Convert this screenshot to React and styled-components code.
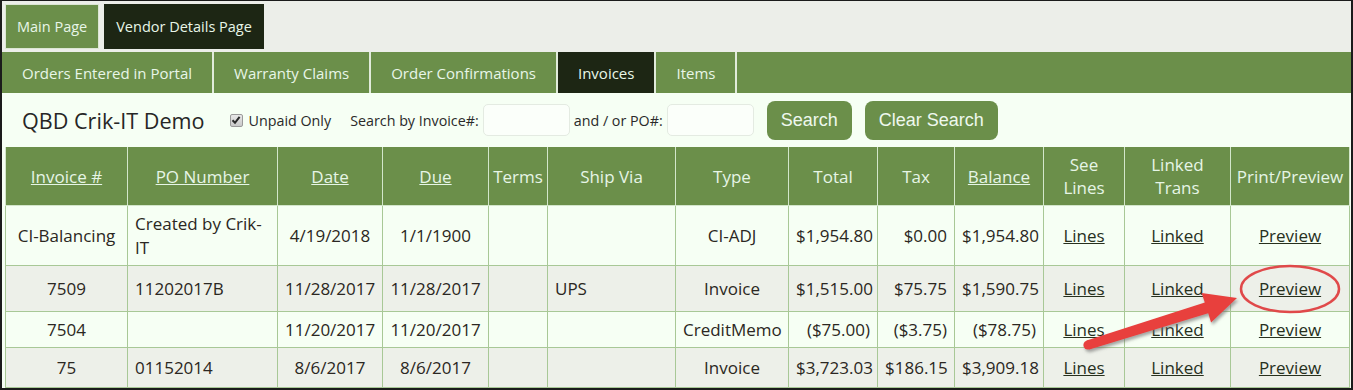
import styled, { createGlobalStyle } from "styled-components"

const GlobalStyle = createGlobalStyle`
  body {
    margin: 0;
    background: #ffffff;
    font-family: "Open Sans", "Noto Sans", sans-serif;
  }
`

const Frame = styled.div`
  position: relative;
  box-sizing: border-box;
  width: 1353px;
  height: 390px;
  overflow: hidden;
  border-style: solid;
  border-color: #1b1b1b;
  border-width: 1px 2px 2px 2px;
  background: #f6fff4;
`

const TopNav = styled.nav`
  display: flex;
  gap: 5px;
  padding: 3px 0 3px 3px;
  background: #eceee9;
`

const TopTab = styled.div`
  box-sizing: border-box;
  height: 45px;
  padding: 0 11px;
  display: flex;
  align-items: center;
  font-size: 14.5px;
  color: #e8f6e8;
  background: ${p => (p.$active ? "#1d2614" : "#6b8f4a")};
  border: 1px solid ${p => (p.$active ? "#1d2614" : "#dbe6d3")};
`

const SubNav = styled.nav`
  display: flex;
  height: 41px;
  background: #6b8f4a;
`

const SubTab = styled.div`
  display: flex;
  align-items: center;
  padding: 0 20px;
  font-size: 15px;
  color: #e8f6e8;
  background: ${p => (p.$active ? "#1d2614" : "#6b8f4a")};
  border-right: 2px solid #e1ebdb;
`

const Toolbar = styled.div`
  display: flex;
  align-items: center;
  height: 54px;
  padding-left: 20px;
  color: #2a2a2a;
`

const Title = styled.h1`
  margin: 0 25px 0 0;
  font-size: 21.6px;
  font-weight: 400;
  color: #262626;
`

const CheckBox = styled.span`
  box-sizing: border-box;
  width: 13px;
  height: 13px;
  margin-right: 6px;
  display: flex;
  align-items: center;
  justify-content: center;
  border: 1px solid #9a9a9a;
  border-radius: 2px;
  background: linear-gradient(#e8e8e8, #c9c9c9);
`

const Label = styled.span`
  font-size: 14.3px;
  margin-right: ${p => p.$gap || 4}px;
`

const Field = styled.input`
  box-sizing: border-box;
  width: 87px;
  height: 32px;
  margin-right: 4px;
  border: 1px solid #e4ebe2;
  border-radius: 5px;
  background: #fbfffa;
  outline: none;
`

const Button = styled.button`
  box-sizing: border-box;
  height: 39px;
  margin-left: ${p => p.$gap || 0}px;
  padding: 0 14px;
  border: none;
  border-radius: 8px;
  background: #6b8f4a;
  color: #eef8ee;
  font-family: "Liberation Sans", Arial, sans-serif;
  font-size: 18px;
`

const Table = styled.table`
  margin-left: 3px;
  width: 1344px;
  table-layout: fixed;
  border-collapse: collapse;
  font-size: 17px;
  line-height: 24px;
`

const Th = styled.th`
  height: 58px;
  padding: 0 4px;
  background: #6b8f4a;
  color: #e6f5e6;
  font-weight: 400;
  line-height: 23px;
  border: 1px solid #d3e6cb;
  border-top: none;

  a {
    color: #e6f5e6;
    text-decoration: underline;
  }
`

const Row = styled.tr`
  height: ${p => p.$h}px;
  background: ${p => (p.$alt ? "#edf0e9" : "#f6fff4")};
`

const Td = styled.td`
  padding: 0 7px;
  text-align: ${p => p.$align || "center"};
  color: #2b2722;
  border: 1px solid #a8c896;
  vertical-align: middle;

  a {
    color: #27301d;
    text-decoration: underline;
  }
`

const Overlay = styled.svg`
  position: absolute;
  top: -1px;
  left: -2px;
  pointer-events: none;
`

const columns = [
  { label: "Invoice #", w: 122, link: true },
  { label: "PO Number", w: 150, link: true },
  { label: "Date", w: 105, link: true },
  { label: "Due", w: 106, link: true },
  { label: "Terms", w: 59 },
  { label: "Ship Via", w: 128 },
  { label: "Type", w: 113 },
  { label: "Total", w: 89 },
  { label: "Tax", w: 77 },
  { label: "Balance", w: 89, link: true },
  { label: ["See", "Lines"], w: 81 },
  { label: ["Linked", "Trans"], w: 106 },
  { label: "Print/Preview", w: 119 },
]

const rows = [
  { inv: "CI-Balancing", po: "Created by Crik-IT", date: "4/19/2018", due: "1/1/1900", ship: "", type: "CI-ADJ", total: "$1,954.80", tax: "$0.00", bal: "$1,954.80", h: 60 },
  { inv: "7509", po: "11202017B", date: "11/28/2017", due: "11/28/2017", ship: "UPS", type: "Invoice", total: "$1,515.00", tax: "$75.75", bal: "$1,590.75", h: 46 },
  { inv: "7504", po: "", date: "11/20/2017", due: "11/20/2017", ship: "", type: "CreditMemo", total: "($75.00)", tax: "($3.75)", bal: "($78.75)", h: 36 },
  { inv: "75", po: "01152014", date: "8/6/2017", due: "8/6/2017", ship: "", type: "Invoice", total: "$3,723.03", tax: "$186.15", bal: "$3,909.18", h: 40 },
]

const subTabs = ["Orders Entered in Portal", "Warranty Claims", "Order Confirmations", "Invoices", "Items"]

// red arrow + circle the screenshot author drew on top
const Annotation = () => (
  <Overlay width="1353" height="390" viewBox="0 0 1353 390">
    <defs>
      <filter id="shade" x="-20%" y="-40%" width="140%" height="180%">
        <feDropShadow dx="1.5" dy="2.5" stdDeviation="1.5" floodColor="#6b6b6b" floodOpacity="0.6" />
      </filter>
    </defs>
    <g filter="url(#shade)" fill="#e8403e">
      <polygon points="1089.4,349.4 1208.2,313.2 1211.1,322.6 1237,298 1201.6,293.0 1204.8,302.4 1086.6,340.6" />
      <circle cx="1088" cy="345" r="4.6" />
    </g>
    <ellipse cx="1290" cy="289" rx="49" ry="23" fill="none" stroke="#e0494a" strokeWidth="2.5" />
  </Overlay>
)

export default function App() {
  return (
    <Frame>
      <GlobalStyle />
      <TopNav>
        <TopTab>Main Page</TopTab>
        <TopTab $active>Vendor Details Page</TopTab>
      </TopNav>
      <SubNav>
        {subTabs.map(t => (
          <SubTab key={t} $active={t === "Invoices"}>{t}</SubTab>
        ))}
      </SubNav>
      <Toolbar>
        <Title>QBD Crik-IT Demo</Title>
        <CheckBox>
          <svg width="10" height="10" viewBox="0 0 10 10">
            <path d="M1.5 5.2 L4 7.8 L8.6 1.8" fill="none" stroke="#2a2a2a" strokeWidth="2" />
          </svg>
        </CheckBox>
        <Label $gap={19}>Unpaid Only</Label>
        <Label>Search by Invoice#:</Label>
        <Field />
        <Label>and / or PO#:</Label>
        <Field />
        <Button $gap={9}>Search</Button>
        <Button $gap={13}>Clear Search</Button>
      </Toolbar>
      <Table>
        <colgroup>
          {columns.map((c, i) => <col key={i} style={{ width: c.w }} />)}
        </colgroup>
        <thead>
          <tr>
            {columns.map((c, i) => (
              <Th key={i}>
                {Array.isArray(c.label)
                  ? c.label.map((l, j) => <div key={j}>{l}</div>)
                  : c.link ? <a href="#">{c.label}</a> : c.label}
              </Th>
            ))}
          </tr>
        </thead>
        <tbody>
          {rows.map((r, i) => (
            <Row key={r.inv} $h={r.h} $alt={i % 2 === 1}>
              <Td>{r.inv}</Td>
              <Td $align="left">{r.po}</Td>
              <Td>{r.date}</Td>
              <Td>{r.due}</Td>
              <Td />
              <Td $align="left">{r.ship}</Td>
              <Td>{r.type}</Td>
              <Td $align="right">{r.total}</Td>
              <Td $align="right">{r.tax}</Td>
              <Td $align="right">{r.bal}</Td>
              <Td><a href="#">Lines</a></Td>
              <Td><a href="#">Linked</a></Td>
              <Td><a href="#">Preview</a></Td>
            </Row>
          ))}
        </tbody>
      </Table>
      <Annotation />
    </Frame>
  )
}
